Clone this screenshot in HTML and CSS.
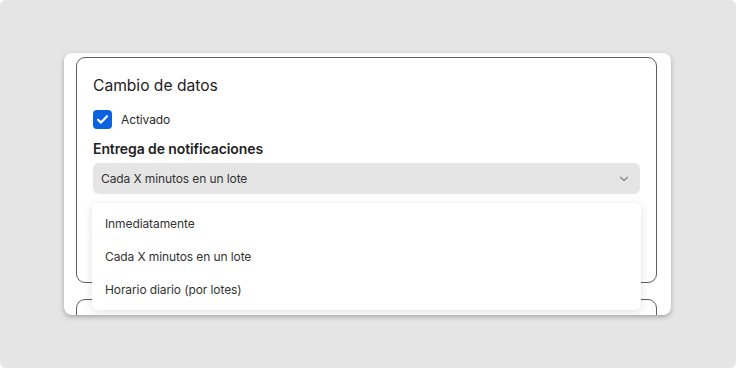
FILE: index.html
```html
<!DOCTYPE html>
<html>
	<head>
		<meta charset="UTF-8">
		<title>Cambio de datos</title>
		<link rel="stylesheet" href="styles.css">
	</head>
	<body>
		<div class="stage">
			<div class="card">
				<div class="section">
					<h2 class="section-title">Cambio de datos</h2>
					<label class="check-row">
						<span class="check-box">
							<svg width="13" height="13" viewBox="0 0 13 13"><path d="M2 6.8 L5 9.6 L11 3.2" fill="none" stroke="#fff" stroke-width="2.2" stroke-linecap="round" stroke-linejoin="round"/></svg>
						</span>
						<span class="check-label">Activado</span>
					</label>
					<div class="field-title">Entrega de notificaciones</div>
					<div class="select-wrap">
						<div class="select">
							<span>Cada X minutos en un lote</span>
							<svg width="10" height="6" viewBox="0 0 10 6"><path d="M1.5 1.2 L5 4.5 L8.5 1.2" fill="none" stroke="#8a8a8a" stroke-width="1.3" stroke-linecap="round" stroke-linejoin="round"/></svg>
						</div>
						<ul class="menu">
							<li>Inmediatamente</li>
							<li>Cada X minutos en un lote</li>
							<li>Horario diario (por lotes)</li>
						</ul>
					</div>
				</div>
				<div class="section"></div>
			</div>
		</div>
	</body>
</html>
```

FILE: styles.css
```css
*{
	padding: 0;
	margin: 0;
	box-sizing: border-box;
}
li{
	list-style: none;
}
html, body{
	width: 736px;
	height: 368px;
	background: #fff;
	font-family: Inter, "Noto Sans", sans-serif;
	color: #222;
	overflow: hidden;
}
.stage{
	width: 736px;
	height: 368px;
	background: #e5e5e5;
	border-radius: 6px;
	padding: 53px 0 0 64px;
}
.card{
	width: 607px;
	height: 262px;
	background: #fff;
	border-radius: 8px;
	padding: 4px 14px 0 12px;
	box-shadow: 0 2px 5px rgba(0,0,0,0.28);
	overflow: hidden;
	display: flex;
	flex-direction: column;
	gap: 16px;
}
.section{
	flex: none;
	border: 1px solid #5e5e5e;
	border-radius: 9px;
	padding: 16px 16px 0 16px;
	height: 226px;
	display: flex;
	flex-direction: column;
}
.section-title{
	font-size: 15.6px;
	font-weight: 400;
	line-height: 24px;
	color: #222;
}
.check-row{
	display: flex;
	align-items: center;
	gap: 9px;
	margin-top: 11px;
	height: 20px;
}
.check-box{
	width: 19px;
	height: 19px;
	border-radius: 4px;
	background: #0b61e0;
	display: flex;
	align-items: center;
	justify-content: center;
}
.check-label{
	font-size: 12px;
	letter-spacing: -0.1px;
	color: #2a2a2a;
}
.field-title{
	margin-top: 10px;
	font-size: 14px;
	letter-spacing: -0.1px;
	font-weight: 600;
	line-height: 20px;
	color: #222;
}
.select-wrap{
	position: relative;
	margin-top: 4px;
}
.select{
	height: 31px;
	background: #e5e5e5;
	border-radius: 6px;
	padding: 0 11px 0 8px;
	display: flex;
	align-items: center;
	justify-content: space-between;
	font-size: 12px;
	letter-spacing: -0.1px;
	color: #333;
}
.menu{
	position: absolute;
	top: 40px;
	left: -1px;
	right: -1px;
	background: #fff;
	border-radius: 6px;
	padding: 4px 0;
	box-shadow: 0 2px 10px rgba(0,0,0,0.12);
}
.menu li{
	height: 33px;
	display: flex;
	align-items: center;
	padding-left: 13px;
	font-size: 12px;
	letter-spacing: -0.1px;
	color: #333;
}
```
